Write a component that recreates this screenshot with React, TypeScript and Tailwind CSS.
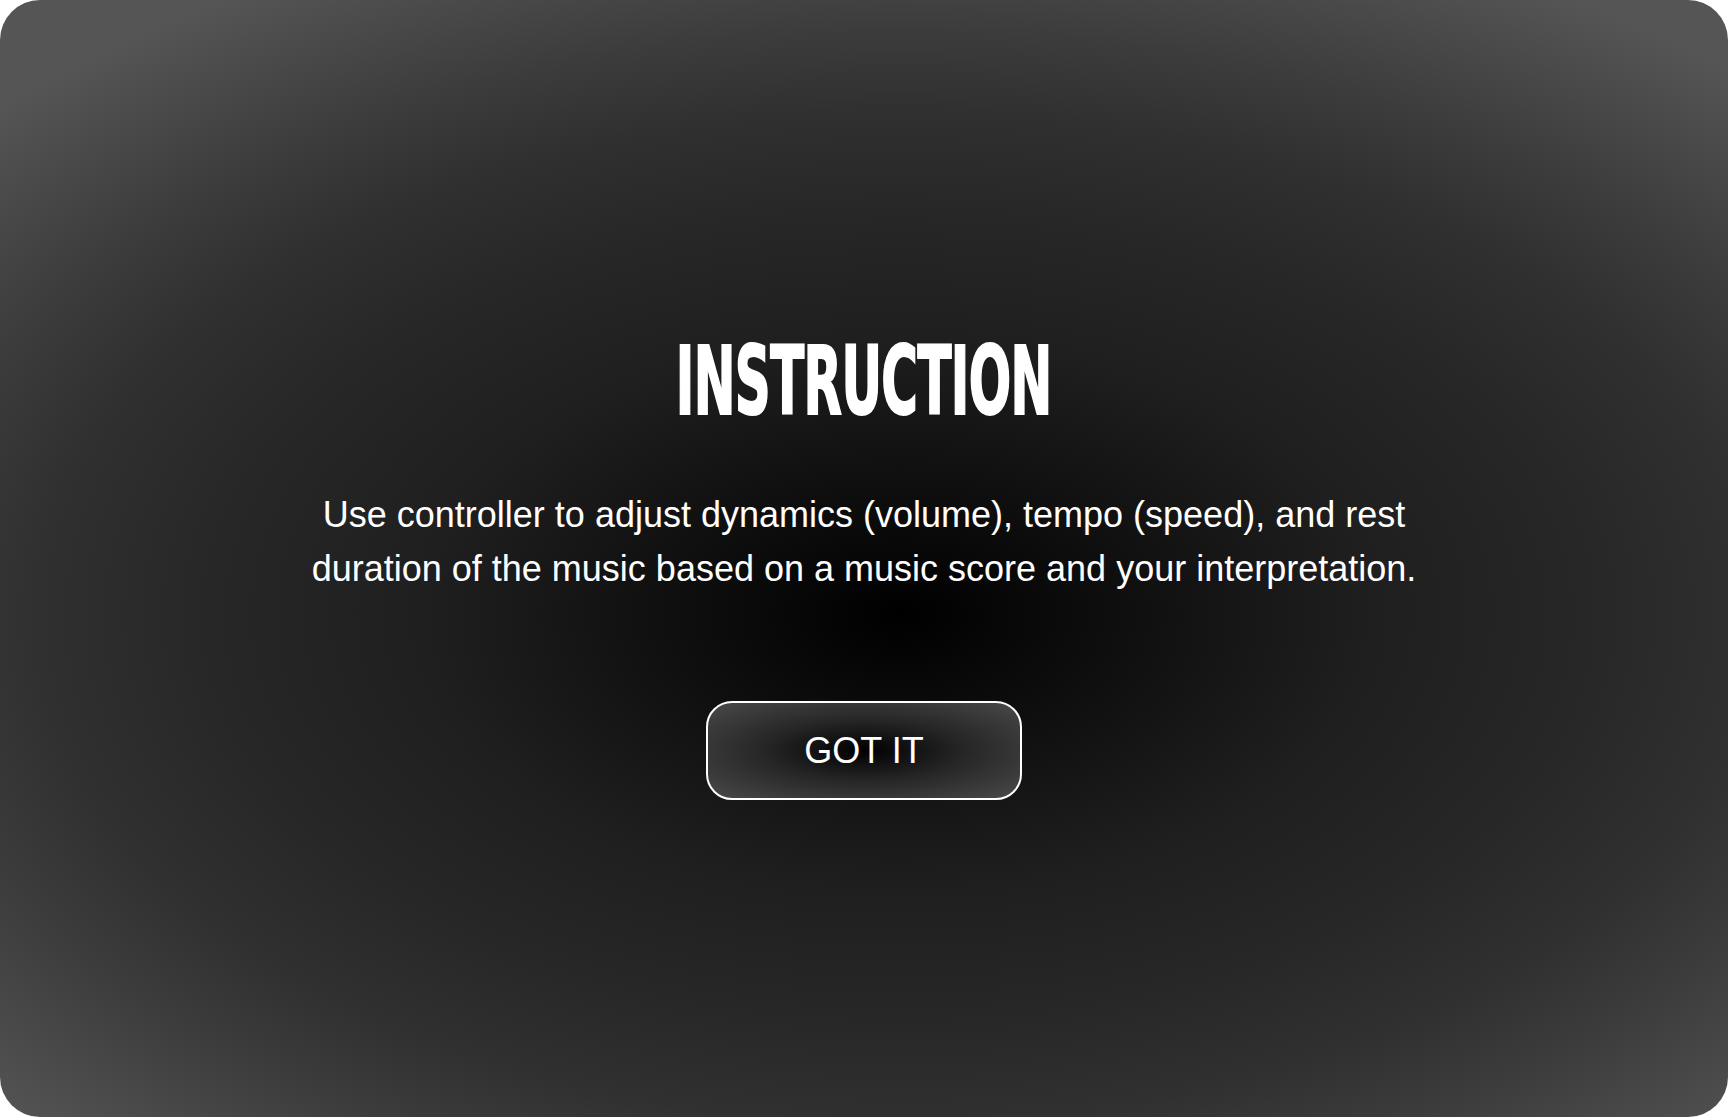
import React from "react";

const App = () => {
  return (
    <div className="h-screen w-full bg-white">
      <div className="flex h-full w-full flex-col items-center rounded-[40px] bg-[radial-gradient(1250px_730px_at_52%_55%,#000000_0%,#0a0a0a_12%,#1f1f1f_38%,#272727_55%,#303030_69%,#3c3c3c_80%,#555555_100%)] bg-[#555555] pt-[335px] font-['Liberation_Sans',Arial,sans-serif] text-white">
        <h1 className="scale-x-[0.59] font-['DejaVu_Sans_Condensed',sans-serif] text-[94px] leading-none font-bold tracking-[-1px] [-webkit-text-stroke:2px_white]">
          INSTRUCTION
        </h1>
        <p className="mt-[59px] max-w-[1150px] text-center text-[36px] leading-[54px]">
          Use controller to adjust dynamics (volume), tempo (speed), and rest
          duration of the music based on a music score and your interpretation.
        </p>
        <button className="mt-[105px] flex h-[99px] w-[316px] items-center justify-center rounded-[26px] border-2 border-white bg-[radial-gradient(ellipse_at_center,#000000_0%,#262626_45%,#4a4a4a_100%)] text-[36px] text-white">
          GOT IT
        </button>
      </div>
    </div>
  );
};

export default App;
